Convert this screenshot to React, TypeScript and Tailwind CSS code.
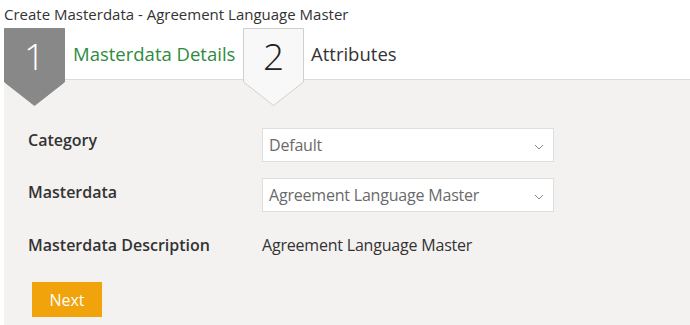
import React from "react";

const Badge = ({ n, active }: { n: string; active?: boolean }) => (
  <div className="relative h-[78px] w-[61px] shrink-0">
    <svg className="absolute inset-0" width="61" height="78" viewBox="0 0 61 78">
      <polygon
        points="0.5,0.5 60.5,0.5 60.5,54 30.5,77.5 0.5,54"
        fill={active ? "#888888" : "#f8f8f8"}
        stroke={active ? "#888888" : "#cfcfcf"}
      />
    </svg>
    <div
      className={`relative flex h-[55px] items-center justify-center text-[37px] font-light leading-none ${
        active ? "text-white" : "text-[#222]"
      }`}
    >
      {n}
    </div>
  </div>
);

const Select = ({ value }: { value: string }) => (
  <div className="flex h-[34px] w-[292px] items-center justify-between border border-[#dedede] bg-white pl-[6px] pr-[9px]">
    <span className="text-[16px] tracking-[-0.2px] text-[#6a6a6a]">{value}</span>
    <svg width="10" height="6" viewBox="0 0 10 6" className="mt-[4px]">
      <polyline points="1,1 5,5 9,1" fill="none" stroke="#8a8a8a" strokeWidth="1" />
    </svg>
  </div>
);

export default function App() {
  return (
    <div className="h-[325px] w-[690px] overflow-hidden bg-white font-['Open_Sans',sans-serif] text-[#333]">
      <div className="h-[28px] pl-[4px] pt-[4px] text-[15px] leading-[20px]">
        Create Masterdata - Agreement Language Master
      </div>

      <div className="relative z-10 flex h-[51px] items-start pl-[4px]">
        <Badge n="1" active />
        <div className="ml-[8px] mt-[12px] w-[170px] text-[18.5px] text-[#2e8b3c]">Masterdata Details</div>
        <Badge n="2" />
        <div className="ml-[7px] mt-[12px] text-[18.5px] text-[#333]">Attributes</div>
      </div>

      <div className="ml-[4px] h-[246px] border-t border-[#dcdcdc] bg-[#f3f2f1] pl-[24px] pt-[48px]">
        <div className="flex items-start">
          <div className="w-[234px] text-[16px] font-semibold leading-[24px]">Category</div>
          <Select value="Default" />
        </div>
        <div className="mt-[16px] flex items-start">
          <div className="w-[234px] pt-[2px] text-[16px] font-semibold leading-[24px]">Masterdata</div>
          <Select value="Agreement Language Master" />
        </div>
        <div className="mt-[21px] flex items-start">
          <div className="w-[234px] text-[16px] font-semibold leading-[24px]">Masterdata Description</div>
          <div className="text-[16px] leading-[24px] tracking-[-0.2px]">Agreement Language Master</div>
        </div>
        <button className="ml-[4px] mt-[25px] h-[35px] w-[70px] bg-[#f0a30a] text-[16px] text-white">Next</button>
      </div>
    </div>
  );
}
